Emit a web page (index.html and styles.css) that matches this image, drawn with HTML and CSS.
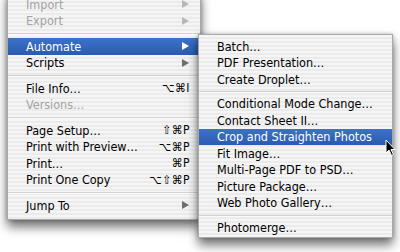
FILE: index.html
```html
<!DOCTYPE html>
<html lang="en">
  <head>
    <meta charset="UTF-8" />
    <title>File menu - Automate</title>
    <link rel="stylesheet" href="styles.css">
  </head>
  <body>
    <ul class="menu main-menu">
      <li class="item disabled"><span class="label">Import</span><span class="arrow"></span></li>
      <li class="item disabled"><span class="label">Export</span><span class="arrow"></span></li>
      <li class="separator"></li>
      <li class="item selected">
        <span class="label">Automate</span><span class="arrow"></span>
        <!-- Automate submenu -->
        <ul class="menu sub-menu">
          <li class="item"><span class="label">Batch…</span></li>
          <li class="item"><span class="label">PDF Presentation…</span></li>
          <li class="item"><span class="label">Create Droplet…</span></li>
          <li class="separator"></li>
          <li class="item"><span class="label">Conditional Mode Change…</span></li>
          <li class="item"><span class="label">Contact Sheet II…</span></li>
          <li class="item selected"><span class="label">Crop and Straighten Photos</span></li>
          <li class="item"><span class="label">Fit Image…</span></li>
          <li class="item"><span class="label">Multi-Page PDF to PSD…</span></li>
          <li class="item"><span class="label">Picture Package…</span></li>
          <li class="item"><span class="label">Web Photo Gallery…</span></li>
          <li class="separator"></li>
          <li class="item"><span class="label">Photomerge…</span></li>
        </ul>
      </li>
      <li class="item"><span class="label">Scripts</span><span class="arrow"></span></li>
      <li class="separator"></li>
      <li class="item"><span class="label">File Info…</span><span class="keys">⌥⌘I</span></li>
      <li class="item disabled"><span class="label">Versions…</span></li>
      <li class="separator"></li>
      <li class="item"><span class="label">Page Setup…</span><span class="keys">⇧⌘P</span></li>
      <li class="item"><span class="label">Print with Preview…</span><span class="keys">⌥⌘P</span></li>
      <li class="item"><span class="label">Print…</span><span class="keys">⌘P</span></li>
      <li class="item"><span class="label">Print One Copy</span><span class="keys">⌥⇧⌘P</span></li>
      <li class="separator"></li>
      <li class="item"><span class="label">Jump To</span><span class="arrow"></span></li>
    </ul>

    <svg class="cursor" width="12" height="18" viewBox="0 0 12 18">
      <path d="M1 1 L1 14 L4 11 L6.5 16.5 L8.5 15.5 L6 10.5 L10 10.5 Z" fill="#000" stroke="#fff" stroke-width="1" stroke-linejoin="round" />
    </svg>
  </body>
</html>
```

FILE: styles.css
```css
body {
  margin: 0;
  background: #fff;
  font-family: "DejaVu Sans Condensed", "DejaVu Sans", sans-serif;
  font-stretch: condensed;
  font-size: 12.5px;
  color: #000;
  width: 400px;
  height: 252px;
  overflow: hidden;
  position: relative;
}
.menu {
  list-style: none;
  margin: 0;
  background: repeating-linear-gradient(#f5f5f5 0 2px, #ebebeb 2px 4px);
  border: 1px solid #a9a9a9;
  box-sizing: border-box;
}
.main-menu {
  width: 194px;
  margin: -10px 0 0 7px;
  padding: 5px 0 5px;
  box-shadow: 0 7px 10px rgba(0, 0, 0, 0.55), 0 0 4px rgba(0, 0, 0, 0.25);
}
.sub-menu {
  position: absolute;
  top: -4px;
  left: calc(100% - 2px);
  width: 195px;
  padding: 3px 0 1px;
  color: #000;
  box-shadow: 0 7px 10px rgba(0, 0, 0, 0.55), 0 0 4px rgba(0, 0, 0, 0.25);
  z-index: 2;
}
.item {
  position: relative;
  display: flex;
  align-items: center;
  height: 16.5px;
  padding: 0 10px 0 18px;
  white-space: nowrap;
}
.label {
  flex: 1;
}
.keys {
  letter-spacing: 0.5px;
  font-size: 12px;
}
.arrow {
  width: 0;
  height: 0;
  margin-right: 1px;
  border-left: 7px solid #6f6f6f;
  border-top: 4.5px solid transparent;
  border-bottom: 4.5px solid transparent;
}
.disabled {
  color: #a3a3a3;
}
.disabled .arrow {
  border-left-color: #b8b8b8;
}
.selected {
  background: linear-gradient(#3d72c9, #2a5bb0);
  color: #fff;
}
.selected > .arrow {
  border-left-color: #fff;
}
.separator {
  height: 9px;
  display: flex;
  align-items: center;
}
.separator::before {
  content: "";
  flex: 1;
  height: 1px;
  background: #d2d2d2;
  box-shadow: 0 1px 0 #fbfbfb;
}
.sub-menu .separator {
  height: 8px;
}
.cursor {
  position: absolute;
  left: 385px;
  top: 139px;
  z-index: 3;
}
```
